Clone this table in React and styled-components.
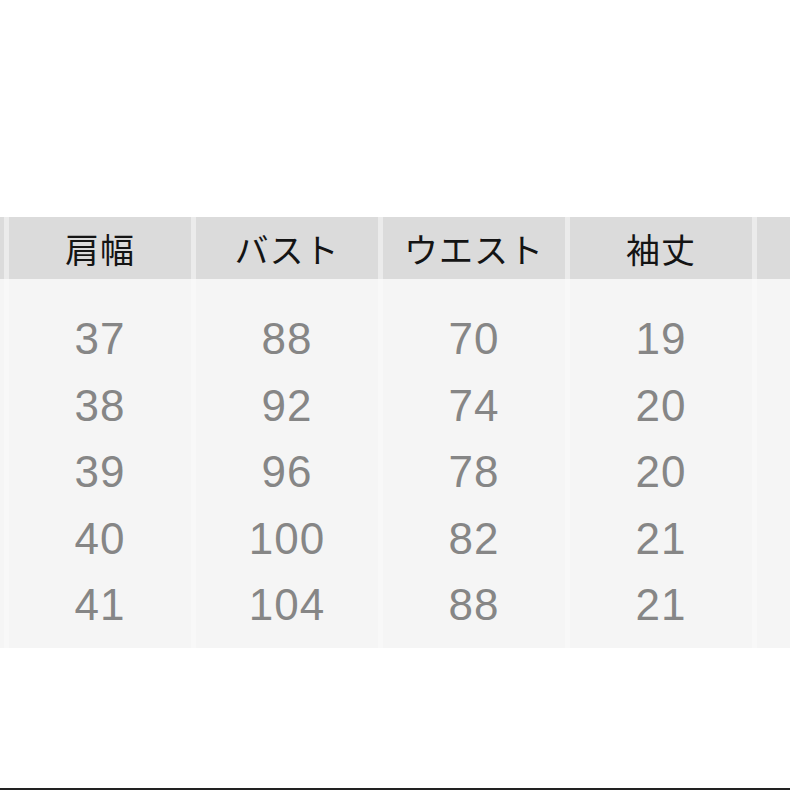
import React from 'react';
import styled, { createGlobalStyle } from 'styled-components';

const GlobalStyle = createGlobalStyle`
  html, body {
    margin: 0;
    padding: 0;
    background: #ffffff;
  }
  body {
    font-family: 'Liberation Sans', 'Noto Sans CJK JP', sans-serif;
  }
`;

const headers = ['肩幅', 'バスト', 'ウエスト', '袖丈'];

const rows = [
  [37, 88, 70, 19],
  [38, 92, 74, 20],
  [39, 96, 78, 20],
  [40, 100, 82, 21],
  [41, 104, 88, 21],
];

const COLUMNS = '4px repeat(4, 182px) 1fr';

const Page = styled.div`
  width: 790px;
  height: 790px;
  overflow: hidden;
  display: flex;
  flex-direction: column;
  background: #ffffff;
`;

const TopSpace = styled.div`
  height: 217px;
  flex-shrink: 0;
`;

const HeaderRow = styled.div`
  display: grid;
  grid-template-columns: ${COLUMNS};
  column-gap: 5px;
  height: 62px;
  background: #ebebeb;
`;

const HeaderCell = styled.div`
  background: #dbdbdb;
  display: flex;
  align-items: center;
  justify-content: center;
  font-family: 'Noto Sans CJK JP', sans-serif;
  font-size: 34px;
  color: #141414;
  letter-spacing: 1px;
`;

const Body = styled.div`
  display: grid;
  grid-template-columns: ${COLUMNS};
  column-gap: 5px;
  background: #f8f8f8;
  height: 369px;
`;

const BodyColumn = styled.div`
  background: #f5f5f5;
  display: flex;
  flex-direction: column;
  align-items: center;
  padding-top: 27px;
`;

const Value = styled.div`
  height: 66.5px;
  display: flex;
  align-items: center;
  justify-content: center;
  font-family: 'Liberation Sans', sans-serif;
  font-size: 44px;
  color: #868686;
  letter-spacing: 1px;
`;

const Filler = styled.div`
  flex: 1;
`;

const BottomLine = styled.div`
  height: 2px;
  background: #222222;
`;

export default function App() {
  return (
    <Page>
      <GlobalStyle />
      <TopSpace />
      <HeaderRow>
        <HeaderCell />
        {headers.map((h) => (
          <HeaderCell key={h}>{h}</HeaderCell>
        ))}
        <HeaderCell />
      </HeaderRow>
      <Body>
        <BodyColumn />
        {headers.map((h, ci) => (
          <BodyColumn key={h}>
            {rows.map((r, ri) => (
              <Value key={ri}>{r[ci]}</Value>
            ))}
          </BodyColumn>
        ))}
        <BodyColumn />
      </Body>
      <Filler />
      <BottomLine />
    </Page>
  );
}
